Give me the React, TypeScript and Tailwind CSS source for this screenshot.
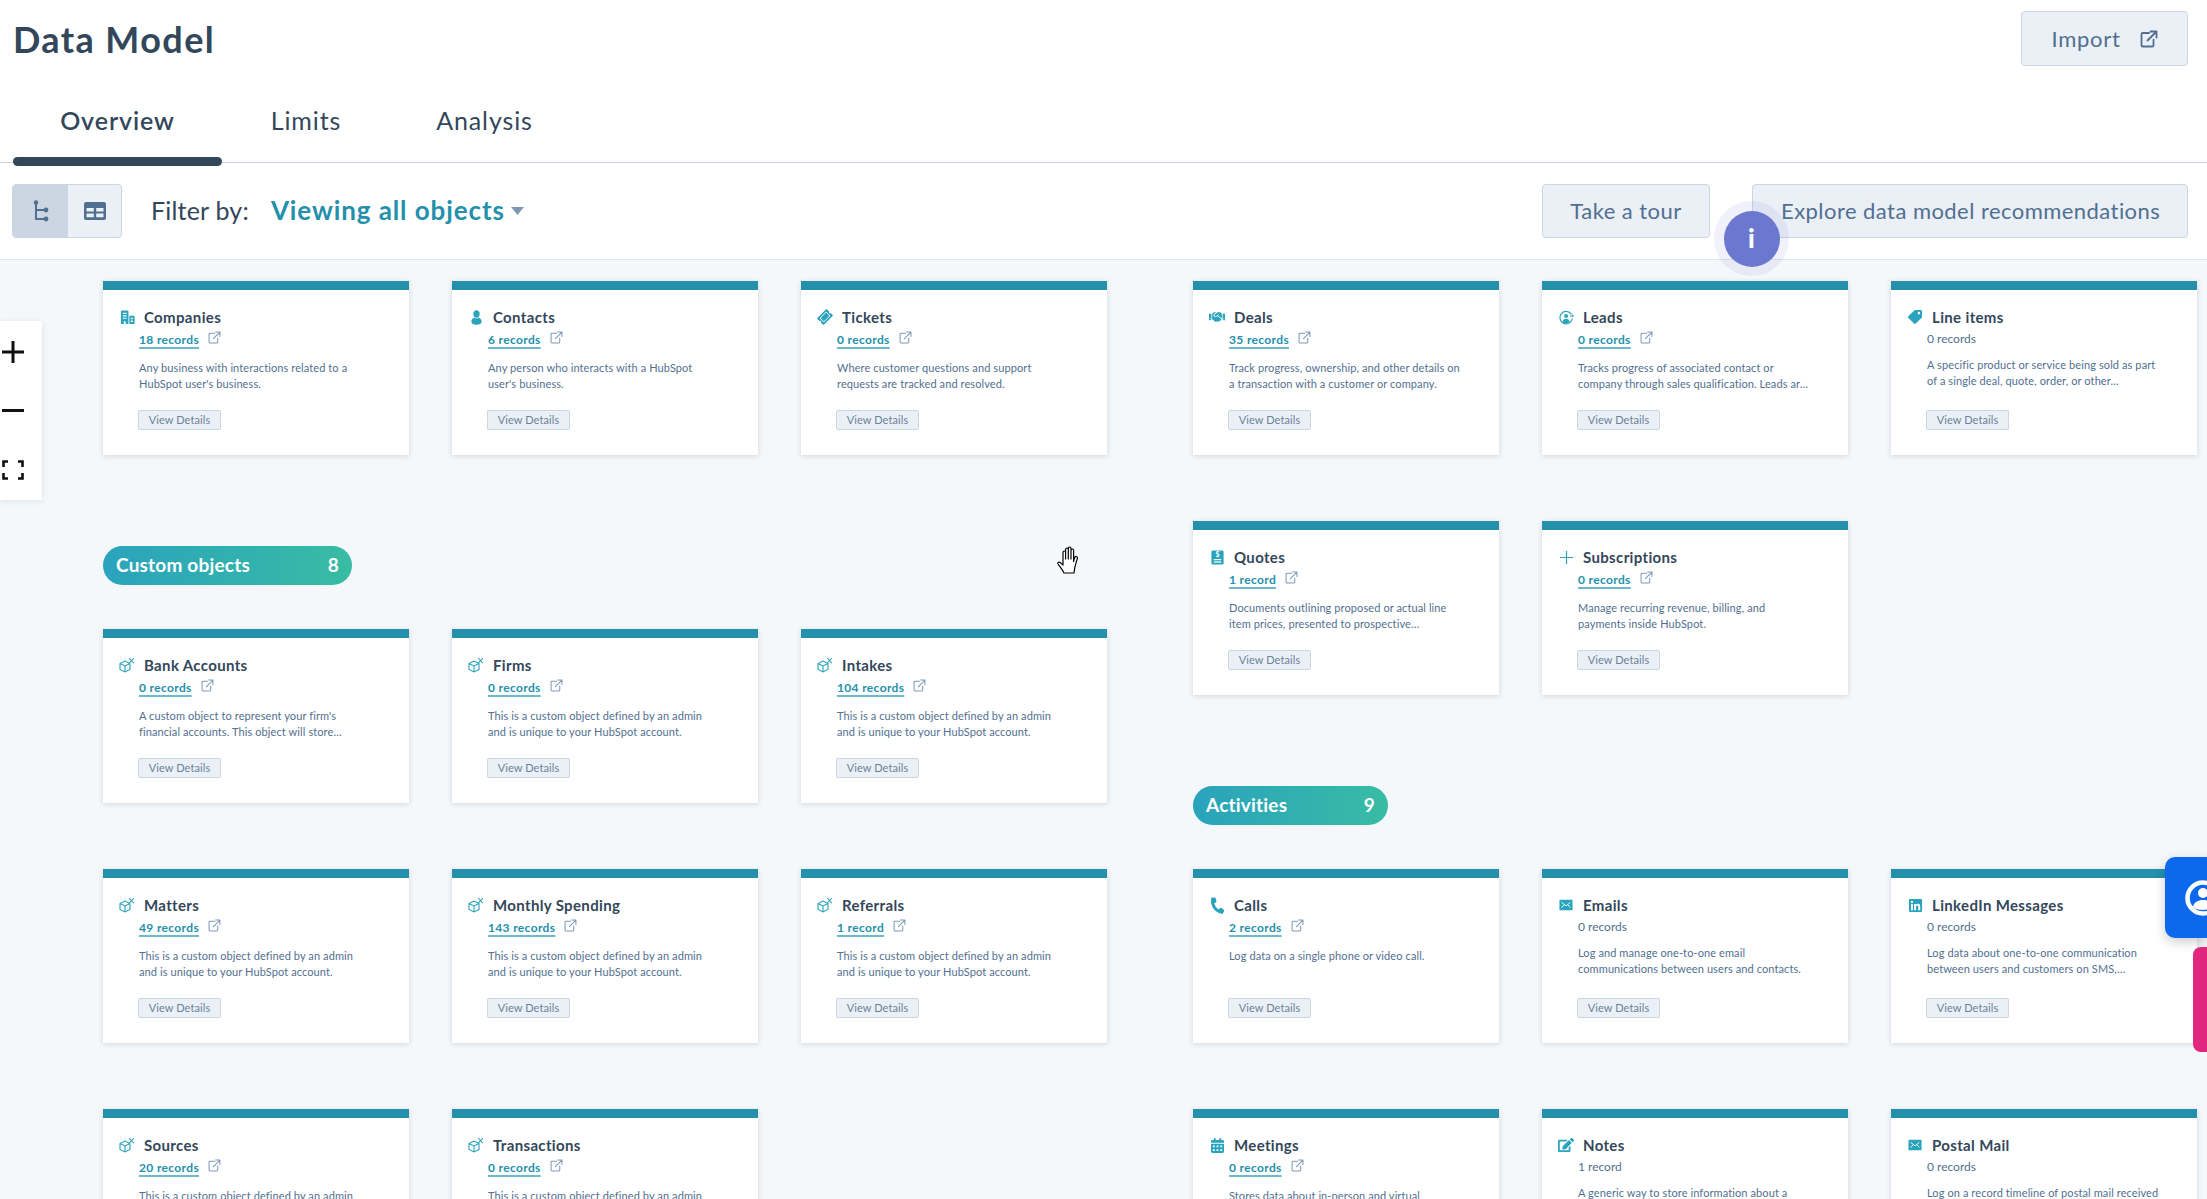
import React from "react";
import { FaHandshake, FaTicketAlt, FaTag, FaPhoneAlt, FaLinkedin, FaCalendarAlt, FaEdit } from "react-icons/fa";

const T = "#2aa3bc";

function Ext({ className = "", w = 1.9 }: { className?: string; w?: number }) {
  return (
    <svg viewBox="0 0 24 24" fill="none" stroke="currentColor" strokeWidth={w} strokeLinecap="round" strokeLinejoin="round" className={className}>
      <path d="M12 4H3.5A1.5 1.5 0 0 0 2 5.5v15A1.5 1.5 0 0 0 3.5 22h13a1.5 1.5 0 0 0 1.5-1.5V13" />
      <path d="M10 14 22 2M14 2h8v8" />
    </svg>
  );
}

const Building = () => (
  <svg viewBox="0 0 16 16" className="h-[15px] w-[15px]" fill={T}>
    <path d="M1 1.5C1 .9 1.4.5 2 .5h6c.6 0 1 .4 1 1V15H6v-3H4v3H1V1.5zM3 3v1.2h4V3H3zm0 2.6v1.2h4V5.6H3zm0 2.6v1.2h4V8.2H3z" fillRule="evenodd" />
    <path d="M10 6h4.6c.5 0 .9.4.9.9V15H10V6zm1.6 2.3v1.5h2V8.3h-2zm0 3v1.5h2v-1.5h-2z" fillRule="evenodd" />
  </svg>
);
const Person = () => (
  <svg viewBox="0 0 12 16" className="h-[15px] w-[11px]" fill={T}>
    <ellipse cx="6" cy="4.2" rx="3.4" ry="4" />
    <path d="M3.6 8.4C1.6 9 .4 10.6.4 12.6c0 2 2.2 3.2 5.6 3.2s5.6-1.2 5.6-3.2c0-2-1.2-3.6-3.2-4.2-1.4 1-3.4 1-4.8 0z" />
  </svg>
);
const Cube = () => (
  <svg viewBox="0 0 16 16" className="h-[16px] w-[16px]" fill="none" stroke={T} strokeWidth="1.1" strokeLinejoin="miter">
    <path d="M6 4 1 6.5v6L6 15l5-2.5v-6L6 4zM1 6.5 6 9l5-2.5M6 9v6" />
    <path d="M10.2 1l4.6 5.2M15 1l-4.8 5.2" strokeWidth="1.1" stroke="#33a2b8" />
  </svg>
);
const Leads = () => (
  <svg viewBox="0 0 16 16" className="h-[15px] w-[15px]" fill="none" stroke={T} strokeWidth="1.3">
    <path d="M12.8 4A6.6 6.6 0 1 0 14 9.8" strokeLinecap="round" />
    <circle cx="7.6" cy="6.3" r="2.1" fill={T} stroke="none" />
    <path d="M3.8 13c.4-2.5 1.8-3.7 3.8-3.7s3.4 1.2 3.8 3.7c-2 1.6-5.6 1.6-7.6 0z" fill={T} stroke="none" />
    <path d="M11.6 6.2h3.6M13.6 4.6l1.7 1.6-1.7 1.6" strokeWidth="1" />
  </svg>
);
const Quote = () => (
  <svg viewBox="0 0 16 16" className="h-[15px] w-[15px]">
    <rect x="1.5" y="0.5" width="13" height="15" rx="1.5" fill={T} />
    <text x="8" y="7.6" fontSize="7.5" fontWeight="700" textAnchor="middle" fill="#fff" fontFamily="Lato">$</text>
    <rect x="4" y="9.6" width="8" height="1.3" fill="#fff" />
    <rect x="4" y="12.2" width="8" height="1.3" fill="#fff" />
  </svg>
);
const Plus = () => (
  <svg viewBox="0 0 16 16" className="h-[15px] w-[15px]" stroke={T} strokeWidth="1.3">
    <path d="M8 1v14M1 8h14" />
  </svg>
);
const MailBox = () => (
  <svg viewBox="0 0 16 16" className="h-[14px] w-[14px]">
    <rect x="0.5" y="2" width="15" height="12" rx="1" fill={T} />
    <path d="M3 5l5 4 5-4M3 11l3-3.5M13 11l-3-3.5" stroke="#fff" strokeWidth="1" fill="none" />
  </svg>
);

const ic = {
  building: <Building />,
  user: <Person />,
  ticket: <FaTicketAlt className="h-[14px] w-[14px] -rotate-45 text-[#2aa3bc]" />,
  deal: <FaHandshake className="h-[16px] w-[16px] text-[#2aa3bc]" />,
  leads: <Leads />,
  tag: <FaTag className="h-[14px] w-[14px] rotate-90 text-[#2aa3bc]" />,
  quote: <Quote />,
  plus: <Plus />,
  cube: <Cube />,
  phone: <FaPhoneAlt className="h-[15px] w-[15px] rotate-[10deg] text-[#2aa3bc]" />,
  mail: <MailBox />,
  linkedin: <FaLinkedin className="h-[15px] w-[15px] text-[#2aa3bc]" />,
  cal: <FaCalendarAlt className="h-[15px] w-[13px] text-[#2aa3bc]" />,
  note: <FaEdit className="h-[16px] w-[16px] text-[#2aa3bc]" />,
};

type C = { icon: keyof typeof ic; title: string; rec: string; link?: boolean; d: string[] };
const custom = ["This is a custom object defined by an admin", "and is unique to your HubSpot account."];

function Card({ c }: { c: C }) {
  const link = c.link !== false;
  return (
    <div className="flex h-[174px] w-[306px] shrink-0 flex-col bg-white shadow-[0_1px_5px_rgba(45,62,80,0.18)]">
      <div className="h-[9px] shrink-0 bg-[#2490ab]" />
      <div className="mt-[17px] flex h-[20px] items-center pl-[16px]">
        <span className="flex w-[16px] justify-center">{ic[c.icon]}</span>
        <span className="ml-[9px] whitespace-nowrap text-[15px] font-bold tracking-[0.35px] text-[#33475b]">{c.title}</span>
      </div>
      {link ? (
        <div className="mt-[4px] flex h-[18px] items-center pl-[36px]">
          <span className="whitespace-nowrap text-[12px] font-bold tracking-[0.35px] text-[#2490ab] underline decoration-[#6fb9cc] decoration-2 underline-offset-[3px]">{c.rec}</span>
          <Ext className="mb-[6px] ml-[9px] h-[13px] w-[13px] text-[#7c98b6]" />
        </div>
      ) : (
        <div className="mt-[3px] flex h-[18px] items-center whitespace-nowrap pl-[36px] text-[12px] text-[#516f90]">{c.rec}</div>
      )}
      <div className={`${link ? "mt-[11px]" : "mt-[9px]"} h-[32px] pl-[36px] text-[11px] leading-[16px] tracking-[0.1px] text-[#516f90]`}>
        {c.d.map((l) => (
          <div key={l} className="whitespace-nowrap">{l}</div>
        ))}
      </div>
      <div className={`${link ? "mt-[18px]" : "mt-[21px]"} pl-[35px]`}>
        <button className="flex h-[20px] w-[83px] items-center justify-center rounded-[2px] border border-[#cbd6e2] bg-[#eaf0f6] text-[11px] tracking-[0.1px] text-[#6b819a]">View Details</button>
      </div>
    </div>
  );
}

function Row({ cards }: { cards: C[] }) {
  return (
    <div className="flex shrink-0 gap-[43px]">
      {cards.map((c) => (
        <Card key={c.title} c={c} />
      ))}
    </div>
  );
}

function Pill({ label, n, w }: { label: string; n: number; w: string }) {
  return (
    <div className={`${w} mt-[91px] flex h-[39px] shrink-0 items-center justify-between rounded-full bg-gradient-to-r from-[#2aa3bc] to-[#38bca3] pl-[13px] pr-[13px] text-[19px] font-bold tracking-[0.2px] text-white`}>
      <span>{label}</span>
      <span>{n}</span>
    </div>
  );
}

export default function App() {
  return (
    <div className="relative h-screen w-full overflow-hidden bg-white font-[family-name:Lato,sans-serif] text-[#33475b]">
      <div className="flex h-[97px] items-start justify-between pl-[13px] pr-[19px]">
        <h1 className="mt-[17px] text-[36px] font-bold leading-[44px] tracking-[1.4px]">Data Model</h1>
        <button className="mt-[11px] flex h-[55px] w-[167px] items-center justify-center gap-[19px] rounded-[4px] border border-[#cbd6e2] bg-[#eaf0f6] text-[22px] tracking-[0.7px] text-[#516f90]">
          Import
          <Ext className="h-[18px] w-[18px]" w={2.4} />
        </button>
      </div>

      <div className="flex h-[66px] border-b border-[#cbd6e2] pl-[13px] text-[25px] leading-[46px] tracking-[0.9px]">
        <div className="relative w-[209px] text-center font-semibold">
          Overview
          <div className="absolute bottom-[-4px] left-0 h-[9px] w-full rounded-full bg-[#33475b]" />
        </div>
        <div className="w-[167px] pl-[1px] text-center">Limits</div>
        <div className="w-[190px] pl-[1px] text-center">Analysis</div>
      </div>

      <div className="flex h-[97px] items-center border-b border-[#dfe3eb] pb-[1px] pl-[12px] pr-[19px]">
        <div className="flex h-[54px] w-[110px] overflow-hidden rounded-[4px] border border-[#cbd6e2] bg-[#eaf0f6]">
          <div className="flex w-[55px] items-center justify-center bg-[#cbd6e2]">
            <svg viewBox="0 0 16 22" className="h-[22px] w-[16px]" fill="none" stroke="#516f90" strokeWidth="2">
              <path d="M3 2v17h9M3 10h9" />
              <circle cx="3" cy="2.5" r="2.2" fill="#516f90" stroke="none" />
              <circle cx="13" cy="10" r="2.4" fill="#516f90" stroke="none" />
              <circle cx="13" cy="19" r="2.4" fill="#516f90" stroke="none" />
            </svg>
          </div>
          <div className="flex flex-1 items-center justify-center">
            <svg viewBox="0 0 22 18" className="h-[18px] w-[22px]">
              <path fillRule="evenodd" fill="#516f90" d="M2 0h18a2 2 0 0 1 2 2v14a2 2 0 0 1-2 2H2a2 2 0 0 1-2-2V2a2 2 0 0 1 2-2zM2.5 6v3.6h7.3V6H2.5zm9.7 0v3.6h7.3V6h-7.3zM2.5 11.6v3.6h7.3v-3.6H2.5zm9.7 0v3.6h7.3v-3.6h-7.3z" />
            </svg>
          </div>
        </div>
        <span className="ml-[29px] text-[25px] tracking-[0.2px]">Filter by:</span>
        <span className="ml-[22px] text-[26px] font-bold tracking-[0.9px] text-[#2490ab]">Viewing all objects</span>
        <svg viewBox="0 0 13 8" className="ml-[6px] h-[8px] w-[13px]"><path d="M0 0h13L6.5 8z" fill="#7c98b6" /></svg>
        <button className="ml-auto h-[54px] w-[168px] translate-x-[1px] rounded-[4px] border border-[#cbd6e2] bg-[#eaf0f6] text-[22px] tracking-[0.45px] text-[#516f90]">Take a tour</button>
        <button className="ml-[43px] h-[54px] w-[436px] rounded-[4px] border border-[#cbd6e2] bg-[#eaf0f6] pl-[28px] text-left text-[22px] tracking-[0.45px] text-[#516f90]">Explore data model recommendations</button>
      </div>

      <div className="flex h-[940px] gap-[86px] bg-[#f5f8fa] pl-[103px] pt-[21px]">
        <div className="flex flex-col">
          <Row cards={[
            { icon: "building", title: "Companies", rec: "18 records", d: ["Any business with interactions related to a", "HubSpot user's business."] },
            { icon: "user", title: "Contacts", rec: "6 records", d: ["Any person who interacts with a HubSpot", "user's business."] },
            { icon: "ticket", title: "Tickets", rec: "0 records", d: ["Where customer questions and support", "requests are tracked and resolved."] },
          ]} />
          <Pill label="Custom objects" n={8} w="w-[249px]" />
          <div className="mt-[44px] flex shrink-0 flex-col gap-[66px]">
            <Row cards={[
              { icon: "cube", title: "Bank Accounts", rec: "0 records", d: ["A custom object to represent your firm's", "financial accounts. This object will store…"] },
              { icon: "cube", title: "Firms", rec: "0 records", d: custom },
              { icon: "cube", title: "Intakes", rec: "104 records", d: custom },
            ]} />
            <Row cards={[
              { icon: "cube", title: "Matters", rec: "49 records", d: custom },
              { icon: "cube", title: "Monthly Spending", rec: "143 records", d: custom },
              { icon: "cube", title: "Referrals", rec: "1 record", d: custom },
            ]} />
            <Row cards={[
              { icon: "cube", title: "Sources", rec: "20 records", d: custom },
              { icon: "cube", title: "Transactions", rec: "0 records", d: custom },
            ]} />
          </div>
        </div>
        <div className="flex flex-col">
          <div className="flex shrink-0 flex-col gap-[66px]">
            <Row cards={[
              { icon: "deal", title: "Deals", rec: "35 records", d: ["Track progress, ownership, and other details on", "a transaction with a customer or company."] },
              { icon: "leads", title: "Leads", rec: "0 records", d: ["Tracks progress of associated contact or", "company through sales qualification. Leads ar…"] },
              { icon: "tag", title: "Line items", rec: "0 records", link: false, d: ["A specific product or service being sold as part", "of a single deal, quote, order, or other…"] },
            ]} />
            <Row cards={[
              { icon: "quote", title: "Quotes", rec: "1 record", d: ["Documents outlining proposed or actual line", "item prices, presented to prospective…"] },
              { icon: "plus", title: "Subscriptions", rec: "0 records", d: ["Manage recurring revenue, billing, and", "payments inside HubSpot."] },
            ]} />
          </div>
          <Pill label="Activities" n={9} w="w-[195px]" />
          <div className="mt-[44px] flex shrink-0 flex-col gap-[66px]">
            <Row cards={[
              { icon: "phone", title: "Calls", rec: "2 records", d: ["Log data on a single phone or video call."] },
              { icon: "mail", title: "Emails", rec: "0 records", link: false, d: ["Log and manage one-to-one email", "communications between users and contacts."] },
              { icon: "linkedin", title: "LinkedIn Messages", rec: "0 records", link: false, d: ["Log data about one-to-one communication", "between users and customers on SMS,…"] },
            ]} />
            <Row cards={[
              { icon: "cal", title: "Meetings", rec: "0 records", d: ["Stores data about in-person and virtual", "meetings."] },
              { icon: "note", title: "Notes", rec: "1 record", link: false, d: ["A generic way to store information about a", "record."] },
              { icon: "mail", title: "Postal Mail", rec: "0 records", link: false, d: ["Log on a record timeline of postal mail received", "or sent."] },
            ]} />
          </div>
        </div>
      </div>

      {/* info hotspot */}
      <div className="absolute left-[1714px] top-[201px] flex h-[75px] w-[75px] items-center justify-center rounded-full bg-[#6c78cf]/10">
        <div className="flex h-[56px] w-[56px] items-center justify-center rounded-full bg-[#6c78cf] text-[26px] font-black text-white">i</div>
      </div>

      {/* zoom controls */}
      <div className="absolute left-0 top-[321px] flex h-[179px] w-[42px] flex-col items-start bg-white pl-[2px] pt-[20px] shadow-[0_1px_6px_rgba(45,62,80,0.12)]">
        <svg viewBox="0 0 22 22" className="h-[22px] w-[22px]" stroke="#111" strokeWidth="3"><path d="M11 0v22M0 11h22" /></svg>
        <svg viewBox="0 0 22 3" className="mt-[46px] h-[3px] w-[22px]" stroke="#111" strokeWidth="3"><path d="M0 1.5h22" /></svg>
        <svg viewBox="0 0 22 20" className="mt-[48px] h-[20px] w-[22px]" fill="none" stroke="#111" strokeWidth="2.6"><path d="M1.5 7V1.5H6M16 1.5h4.5V7M1.5 13v5.5H6M16 18.5h4.5V13" /></svg>
      </div>

      {/* cursor */}
      <svg viewBox="0 0 28 28" className="absolute left-[1056px] top-[546px] h-[28px] w-[28px]" fill="#fff" stroke="#000" strokeWidth="1.2" strokeLinejoin="round">
        <path d="M8 27c-1-2.5-3-5-6-9-.8-1.2.6-2.6 2-1.6L7 19V6.5c0-2 2.6-2 2.6 0V13V3.5c0-2 2.7-2 2.7 0V13V2.5c0-2 2.7-2 2.7 0V13V4.5c0-2 2.6-2 2.6 0v11c0 0 .3-2 1.2-4 .8-1.8 3-1 2.6.8-1 4-2.8 7-3.4 14.7z" />
      </svg>

      {/* side widgets */}
      <div className="absolute right-0 top-[857px] flex h-[81px] w-[42px] items-center overflow-hidden rounded-l-[10px] bg-[#0c68ec] pl-[20px] shadow-[0_4px_12px_rgba(0,0,0,0.2)]">
        <svg viewBox="0 0 36 36" className="h-[36px] w-[36px] shrink-0">
          <circle cx="18" cy="18" r="15.5" fill="none" stroke="#fff" strokeWidth="4.5" />
          <circle cx="18" cy="13" r="5" fill="#fff" />
          <path d="M8 27c1-5 5-7 10-7s9 2 10 7c-5 4-15 4-20 0z" fill="#fff" />
        </svg>
      </div>
      <div className="absolute right-0 top-[947px] h-[105px] w-[14px] rounded-l-[8px] bg-[#e0267f]" />
    </div>
  );
}
